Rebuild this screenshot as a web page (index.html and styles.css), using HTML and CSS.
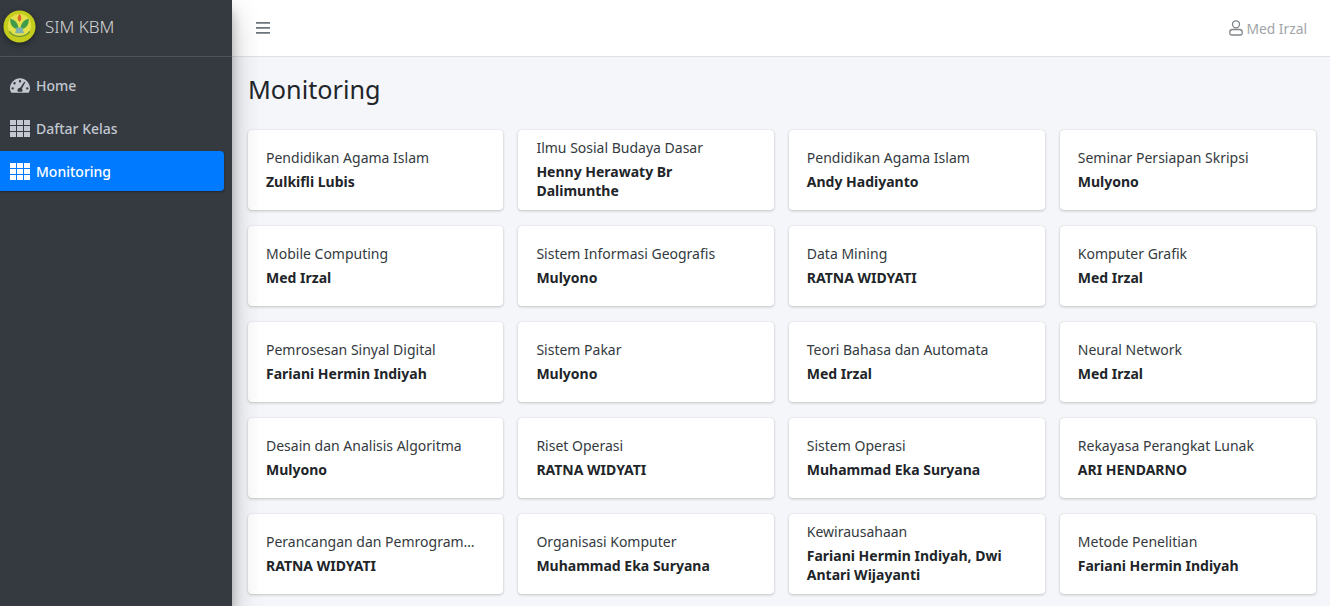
FILE: index.html
```html
<!DOCTYPE html>
<html>

<head>
  <title>SIM KBM - Monitoring</title>
  <link rel="stylesheet" href="styles.css">
</head>

<body>
  <aside class="sidebar">
    <div class="brand">
      <svg class="brand-logo" viewBox="0 0 34 34">
        <circle cx="17" cy="17" r="16.5" fill="#c4cc1c" />
        <circle cx="17" cy="16" r="12" fill="#e3e04a" />
        <path d="M16 20 C10 19 7 15 7.500 9 C12.500 10 16 14 16 20 Z" fill="#3f9a4a" />
        <path d="M18 20 C24 19 27 15 26.500 9 C21.500 10 18 14 18 20 Z" fill="#3f9a4a" />
        <path d="M17 4 C19.500 7 19.500 10 17 12 C14.500 10 14.500 7 17 4 Z" fill="#d9662a" />
        <path d="M14 18 H20 L21.500 24 H12.500 Z" fill="#7fb0b0" />
        <path d="M6.500 22 C11 29 23 29 27.500 22" fill="none" stroke="#6f9a2e" stroke-width="1.500" />
      </svg>
      <span class="brand-text">SIM KBM</span>
    </div>
    <nav class="nav">
      <a class="nav-link" href="#">
        <svg class="nav-icon" viewBox="0 0 22 18">
          <path fill-rule="evenodd" d="M11 1 C5 1 0 6 0 12 C0 14 .6 15.600 1.500 17 H20.500 C21.400 15.600 22 14 22 12 C22 6 17 1 11 1 Z M11 3 A1.300 1.300 0 1 1 11 5.600 A1.300 1.300 0 0 1 11 3 Z M5 5.200 A1.300 1.300 0 1 1 5 7.800 A1.300 1.300 0 0 1 5 5.200 Z M3 10.800 A1.300 1.300 0 1 1 3 13.400 A1.300 1.300 0 0 1 3 10.800 Z M19 10.800 A1.300 1.300 0 1 1 19 13.400 A1.300 1.300 0 0 1 19 10.800 Z M15.700 5 L16.900 5.500 L13 12.500 C13.500 13 13.800 13.600 13.800 14.200 C13.800 15 13.400 15.600 12.900 16 H9.100 C8.600 15.600 8.200 15 8.200 14.200 C8.200 12.800 9.500 11.600 11.200 11.600 Z" />
        </svg>
        Home
      </a>
      <a class="nav-link" href="#">
        <svg class="nav-icon" viewBox="0 0 20 17">
          <path d="M0 0h6v5H0zM7 0h6v5H7zM14 0h6v5h-6zM0 6h6v5H0zM7 6h6v5H7zM14 6h6v5h-6zM0 12h6v5H0zM7 12h6v5H7zM14 12h6v5h-6z" />
        </svg>
        Daftar Kelas
      </a>
      <a class="nav-link active" href="#">
        <svg class="nav-icon" viewBox="0 0 20 17">
          <path d="M0 0h6v5H0zM7 0h6v5H7zM14 0h6v5h-6zM0 6h6v5H0zM7 6h6v5H7zM14 6h6v5h-6zM0 12h6v5H0zM7 12h6v5H7zM14 12h6v5h-6z" />
        </svg>
        Monitoring
      </a>
    </nav>
  </aside>

  <div class="wrapper">
    <header class="topbar">
      <svg class="menu-icon" viewBox="0 0 14 12">
        <path d="M0 0h14v1.800H0zM0 5h14v1.800H0zM0 10h14v1.800H0z" />
      </svg>
      <div class="user">
        <svg class="user-icon" viewBox="0 0 14 16">
          <circle cx="7" cy="4.300" r="3.500" />
          <path d="M3.500 9.500 H10.500 C12 9.500 13.200 10.700 13.200 12.300 V13.300 C13.200 14.200 12.500 15 11.600 15 H2.400 C1.500 15 .8 14.200 .8 13.300 V12.300 C.8 10.700 2 9.500 3.500 9.500 Z" />
        </svg>
        Med Irzal
      </div>
    </header>

    <main class="content">
      <h1>Monitoring</h1>
      <div class="card-grid">
        <a class="card" href="#"><span class="course">Pendidikan Agama Islam</span><strong>Zulkifli Lubis</strong></a>
        <a class="card" href="#"><span class="course">Ilmu Sosial Budaya Dasar</span><strong>Henny Herawaty Br Dalimunthe</strong></a>
        <a class="card" href="#"><span class="course">Pendidikan Agama Islam</span><strong>Andy Hadiyanto</strong></a>
        <a class="card" href="#"><span class="course">Seminar Persiapan Skripsi</span><strong>Mulyono</strong></a>
        <a class="card" href="#"><span class="course">Mobile Computing</span><strong>Med Irzal</strong></a>
        <a class="card" href="#"><span class="course">Sistem Informasi Geografis</span><strong>Mulyono</strong></a>
        <a class="card" href="#"><span class="course">Data Mining</span><strong>RATNA WIDYATI</strong></a>
        <a class="card" href="#"><span class="course">Komputer Grafik</span><strong>Med Irzal</strong></a>
        <a class="card" href="#"><span class="course">Pemrosesan Sinyal Digital</span><strong>Fariani Hermin Indiyah</strong></a>
        <a class="card" href="#"><span class="course">Sistem Pakar</span><strong>Mulyono</strong></a>
        <a class="card" href="#"><span class="course">Teori Bahasa dan Automata</span><strong>Med Irzal</strong></a>
        <a class="card" href="#"><span class="course">Neural Network</span><strong>Med Irzal</strong></a>
        <a class="card" href="#"><span class="course">Desain dan Analisis Algoritma</span><strong>Mulyono</strong></a>
        <a class="card" href="#"><span class="course">Riset Operasi</span><strong>RATNA WIDYATI</strong></a>
        <a class="card" href="#"><span class="course">Sistem Operasi</span><strong>Muhammad Eka Suryana</strong></a>
        <a class="card" href="#"><span class="course">Rekayasa Perangkat Lunak</span><strong>ARI HENDARNO</strong></a>
        <a class="card" href="#"><span class="course">Perancangan dan Pemrogram…</span><strong>RATNA WIDYATI</strong></a>
        <a class="card" href="#"><span class="course">Organisasi Komputer</span><strong>Muhammad Eka Suryana</strong></a>
        <a class="card" href="#"><span class="course">Kewirausahaan</span><strong>Fariani Hermin Indiyah, Dwi Antari Wijayanti</strong></a>
        <a class="card" href="#"><span class="course">Metode Penelitian</span><strong>Fariani Hermin Indiyah</strong></a>
      </div>
    </main>
  </div>
</body>

</html>
```
FILE: styles.css
```css
body {
  font-family: "Noto Sans", "Open Sans", sans-serif;
  font-size: 14px;
  color: #212529;
  background-color: #f4f6f9;
  display: flex;
  height: 606px;
  margin: 0;
  overflow: hidden;
}

a {
  color: inherit;
  text-decoration: none;
}

.sidebar {
  flex: 0 0 232px;
  background-color: #343a40;
  box-shadow: 0 14px 28px rgba(0, 0, 0, 0.25), 0 10px 10px rgba(0, 0, 0, 0.22);
  z-index: 1;
}

.brand {
  display: flex;
  align-items: center;
  gap: 9px;
  height: 57px;
  box-sizing: border-box;
  padding-left: 3px;
  padding-bottom: 3px;
  border-bottom: 1px solid #4b545c;
  color: rgba(255, 255, 255, 0.8);
}

.brand-logo {
  width: 33px;
  height: 33px;
  filter: drop-shadow(0 2px 3px rgba(0, 0, 0, 0.4));
}

.brand-text {
  font-size: 17px;
  font-weight: 300;
}

.nav {
  display: flex;
  flex-direction: column;
  gap: 3px;
  padding: 8px 8px 0 0;
}

.nav-link {
  display: flex;
  align-items: center;
  height: 40px;
  padding-left: 10px;
  border-radius: 0 4px 4px 0;
  color: #c2c7d0;
  font-weight: 500;
}

.nav-link.active {
  background-color: #007bff;
  color: white;
  box-shadow: 0 1px 3px rgba(0, 0, 0, 0.12), 0 1px 2px rgba(0, 0, 0, 0.24);
}

.nav-icon {
  width: 20px;
  height: 17px;
  margin-right: 6px;
  fill: currentColor;
}

.wrapper {
  flex: 1;
  min-width: 0;
}

.topbar {
  display: flex;
  align-items: center;
  justify-content: space-between;
  height: 57px;
  box-sizing: border-box;
  padding: 0 23px 0 24px;
  background-color: white;
  border-bottom: 1px solid #dee2e6;
}

.menu-icon {
  width: 14px;
  height: 12px;
  fill: #6c757d;
}

.user {
  display: flex;
  align-items: center;
  gap: 3px;
  font-size: 13.8px;
  color: #a0a4a8;
}

.user-icon {
  width: 14px;
  height: 16px;
  fill: none;
  stroke: #7f8589;
  stroke-width: 1.3;
}

.content {
  padding: 16px 14px 0 16px;
}

h1 {
  font-size: 25.2px;
  font-weight: 400;
  line-height: 32px;
  margin: 0 0 25px;
}

.card-grid {
  display: grid;
  grid-template-columns: 255.4px 255.4px 256px 256px;
  grid-auto-rows: 80px;
  column-gap: 15px;
  row-gap: 16px;
}

.card {
  display: flex;
  flex-direction: column;
  justify-content: center;
  gap: 4px;
  padding: 0 18px 2px;
  min-width: 0;
  background-color: white;
  border-radius: 4px;
  box-shadow: 0 0 1px rgba(0, 0, 0, 0.125), 0 1px 3px rgba(0, 0, 0, 0.2);
}

.course {
  white-space: nowrap;
  color: #343a40;
  line-height: 20px;
}

.card strong {
  font-weight: 700;
  line-height: 19px;
}
```
